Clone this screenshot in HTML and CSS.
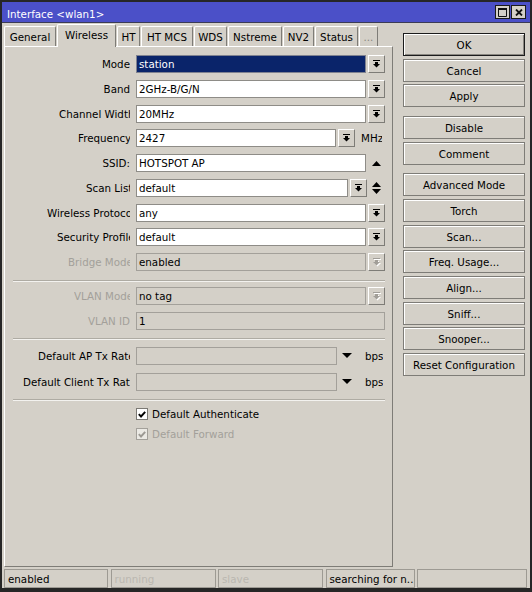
FILE: index.html
```html
<!DOCTYPE html>
<html>
<head>
<meta charset="utf-8">
<title>Interface &lt;wlan1&gt;</title>
<link rel="stylesheet" href="styles.css">
</head>
<body>
<div class="win">
  <div class="titlebar">
    <span class="title">Interface &lt;wlan1&gt;</span>
    <div class="tbtns">
      <span class="tbtn"><svg width="9" height="9" viewBox="0 0 9 9"><path d="M0.5 0.5h8v8h-8z" fill="none" stroke="#111"/><rect x="0" y="0" width="9" height="2" fill="#111"/></svg></span>
      <span class="tbtn"><svg width="8" height="7" viewBox="0 0 8 7"><path d="M1 0.5l6 6M7 0.5l-6 6" stroke="#111" stroke-width="1.8"/></svg></span>
    </div>
  </div>
  <div class="body">
    <div class="main">
      <div class="left">
        <div class="tabs">
          <span class="tab t-general">General</span>
          <span class="tab sel t-wireless">Wireless</span>
          <span class="tab t-ht">HT</span>
          <span class="tab t-htmcs">HT MCS</span>
          <span class="tab t-wds">WDS</span>
          <span class="tab t-nstreme">Nstreme</span>
          <span class="tab t-nv2">NV2</span>
          <span class="tab t-status">Status</span>
          <span class="tab t-more">...</span>
        </div>
        <div class="panel">
          <div class="grp g1">
            <div class="row">
              <span class="lbl"><span>Mode</span></span>
              <span class="inp selected">station</span>
              <span class="dd"><svg width="7" height="8" viewBox="0 0 7 8"><rect width="7" height="1"/><rect x="2" y="2" width="3" height="2"/><path d="M0 4h7L3.5 7.5z"/></svg></span>
            </div>
            <div class="row">
              <span class="lbl"><span>Band</span></span>
              <span class="inp">2GHz-B/G/N</span>
              <span class="dd"><svg width="7" height="8" viewBox="0 0 7 8"><rect width="7" height="1"/><rect x="2" y="2" width="3" height="2"/><path d="M0 4h7L3.5 7.5z"/></svg></span>
            </div>
            <div class="row">
              <span class="lbl"><span class="clip w-chan">Channel Width</span></span>
              <span class="inp">20MHz</span>
              <span class="dd"><svg width="7" height="8" viewBox="0 0 7 8"><rect width="7" height="1"/><rect x="2" y="2" width="3" height="2"/><path d="M0 4h7L3.5 7.5z"/></svg></span>
            </div>
            <div class="row">
              <span class="lbl"><span class="clip w-freq">Frequency</span></span>
              <span class="inp inp-freq">2427</span>
              <span class="dd"><svg width="7" height="8" viewBox="0 0 7 8"><rect width="7" height="1"/><rect x="2" y="2" width="3" height="2"/><path d="M0 4h7L3.5 7.5z"/></svg></span>
              <span class="unit unit-mhz">MHz</span>
            </div>
            <div class="row">
              <span class="lbl"><span>SSID:</span></span>
              <span class="inp inp-ssid">HOTSPOT AP</span>
              <span class="arrows"><svg width="9" height="5" viewBox="0 0 9 5"><path d="M0 5h9L4.5 0z"/></svg></span>
            </div>
            <div class="row">
              <span class="lbl"><span class="clip w-scan">Scan List</span></span>
              <span class="inp inp-scan">default</span>
              <span class="dd"><svg width="7" height="8" viewBox="0 0 7 8"><rect width="7" height="1"/><rect x="2" y="2" width="3" height="2"/><path d="M0 4h7L3.5 7.5z"/></svg></span>
              <span class="arrows"><svg width="9" height="12" viewBox="0 0 9 12"><path d="M0 5h9L4.5 0z"/><path d="M0 7h9L4.5 12z"/></svg></span>
            </div>
            <div class="row">
              <span class="lbl"><span class="clip w-proto">Wireless Protocol</span></span>
              <span class="inp">any</span>
              <span class="dd"><svg width="7" height="8" viewBox="0 0 7 8"><rect width="7" height="1"/><rect x="2" y="2" width="3" height="2"/><path d="M0 4h7L3.5 7.5z"/></svg></span>
            </div>
            <div class="row">
              <span class="lbl"><span class="clip w-sec">Security Profile</span></span>
              <span class="inp">default</span>
              <span class="dd"><svg width="7" height="8" viewBox="0 0 7 8"><rect width="7" height="1"/><rect x="2" y="2" width="3" height="2"/><path d="M0 4h7L3.5 7.5z"/></svg></span>
            </div>
            <div class="row">
              <span class="lbl off"><span class="clip w-bridge">Bridge Mode</span></span>
              <span class="inp dis">enabled</span>
              <span class="dd dd-off"><svg width="8" height="9" viewBox="0 0 8 9"><g fill="#fff" transform="translate(1 1)"><rect width="7" height="1"/><rect x="2" y="2" width="3" height="2"/><path d="M0 4h7L3.5 7.5z"/></g><g fill="#a19e98"><rect width="7" height="1"/><rect x="2" y="2" width="3" height="2"/><path d="M0 4h7L3.5 7.5z"/></g></svg></span>
            </div>
          </div>
          <div class="sep sep1"></div>
          <div class="grp g2">
            <div class="row">
              <span class="lbl off"><span class="clip w-vlanmode">VLAN Mode</span></span>
              <span class="inp dis">no tag</span>
              <span class="dd dd-off"><svg width="8" height="9" viewBox="0 0 8 9"><g fill="#fff" transform="translate(1 1)"><rect width="7" height="1"/><rect x="2" y="2" width="3" height="2"/><path d="M0 4h7L3.5 7.5z"/></g><g fill="#a19e98"><rect width="7" height="1"/><rect x="2" y="2" width="3" height="2"/><path d="M0 4h7L3.5 7.5z"/></g></svg></span>
            </div>
            <div class="row">
              <span class="lbl off"><span>VLAN ID</span></span>
              <span class="inp dis">1</span>
            </div>
          </div>
          <div class="sep"></div>
          <div class="grp g3">
            <div class="row">
              <span class="lbl"><span class="clip w-aptx">Default AP Tx Rate</span></span>
              <span class="inp dis inp-rate"></span>
              <span class="rate-arrow"><svg width="10" height="5" viewBox="0 0 10 5"><path d="M0 0h10L5 5z"/></svg></span>
              <span class="unit unit-bps">bps</span>
            </div>
            <div class="row">
              <span class="lbl"><span class="clip w-cltx">Default Client Tx Rate</span></span>
              <span class="inp dis inp-rate"></span>
              <span class="rate-arrow"><svg width="10" height="5" viewBox="0 0 10 5"><path d="M0 0h10L5 5z"/></svg></span>
              <span class="unit unit-bps">bps</span>
            </div>
          </div>
          <div class="sep sep3"></div>
          <div class="checks">
            <div class="check">
              <span class="cb"><svg width="8" height="7" viewBox="0 0 8 7"><path d="M0.8 3.2l2.2 2.3L7.2 0.8" fill="none" stroke="#000" stroke-width="1.9"/></svg></span>
              <span>Default Authenticate</span>
            </div>
            <div class="check off">
              <span class="cb cb-off"><svg width="8" height="7" viewBox="0 0 8 7"><path d="M0.8 3.2l2.2 2.3L7.2 0.8" fill="none" stroke="#9c9993" stroke-width="1.9"/></svg></span>
              <span>Default Forward</span>
            </div>
          </div>
        </div>
      </div>
      <div class="right">
        <div class="bgrp">
          <span class="btn btn-default">OK</span>
          <span class="btn">Cancel</span>
          <span class="btn">Apply</span>
        </div>
        <div class="bgrp">
          <span class="btn">Disable</span>
          <span class="btn">Comment</span>
        </div>
        <div class="bgrp">
          <span class="btn">Advanced Mode</span>
          <span class="btn">Torch</span>
          <span class="btn">Scan...</span>
          <span class="btn">Freq. Usage...</span>
          <span class="btn">Align...</span>
          <span class="btn">Sniff...</span>
          <span class="btn">Snooper...</span>
          <span class="btn">Reset Configuration</span>
        </div>
      </div>
    </div>
    <div class="status">
      <span class="cell c1">enabled</span>
      <span class="cell c2 off">running</span>
      <span class="cell c3 off">slave</span>
      <span class="cell c4">searching for n..</span>
      <span class="cell c5"></span>
    </div>
  </div>
</div>
</body>
</html>
```

FILE: styles.css
```css
html, body {
  margin: 0;
  padding: 0;
  background: #d4d0c8;
}

body {
  font-family: "DejaVu Sans", "Verdana", sans-serif;
  font-size: 10.3px;
  color: #000;
}

.win {
  width: 532px;
  height: 592px;
  box-sizing: border-box;
  border-style: solid;
  border-color: #262626;
  border-width: 2px 2px 4px 2px;
  background: #d4d0c8;
  display: flex;
  flex-direction: column;
}

/* title bar */
.titlebar {
  height: 20px;
  flex-shrink: 0;
  background: #4b50c8;
  border-bottom: 1px solid #3b3b55;
  display: flex;
  align-items: center;
  justify-content: space-between;
  padding: 0 4px 0 5px;
}

.title {
  color: #fff;
  padding-top: 4px;
  line-height: 12px;
  white-space: nowrap;
}

.tbtns {
  display: flex;
  gap: 1px;
}

.tbtn {
  width: 15px;
  height: 14px;
  box-sizing: border-box;
  border: 1px solid #1a1a1a;
  background: #d4d0c8;
  display: flex;
  align-items: center;
  justify-content: center;
}

/* body */
.body {
  flex: 1;
  display: flex;
  flex-direction: column;
  padding: 1px 5px 0 2px;
  min-height: 0;
}

.main {
  flex: 1;
  display: flex;
  gap: 10px;
  min-height: 0;
}

.left {
  width: 389px;
  display: flex;
  flex-direction: column;
}

/* tabs */
.tabs {
  height: 22px;
  display: flex;
  align-items: flex-end;
  gap: 1px;
  flex-shrink: 0;
}

.tab {
  box-sizing: border-box;
  height: 20px;
  border-top: 1px solid #fff;
  border-left: 1px solid #fff;
  border-right: 1px solid #7e7c77;
  border-radius: 2px 2px 0 0;
  padding-top: 2px;
  line-height: 17px;
  text-align: center;
  white-space: nowrap;
  overflow: hidden;
  background: #d4d0c8;
}

.tab.sel {
  height: 23px;
  margin-bottom: -1px;
  position: relative;
  z-index: 2;
}

.t-general { width: 52px; }
.t-wireless { width: 59px; }
.t-ht { width: 23px; }
.t-htmcs { width: 52px; }
.t-wds { width: 33px; }
.t-nstreme { width: 54px; }
.t-nv2 { width: 31px; }
.t-status { width: 43px; }
.t-more { width: 19px; color: #8a8781; }

/* panel */
.panel {
  flex: 1;
  box-sizing: border-box;
  border-style: solid;
  border-width: 1px;
  border-color: #fff #7e7c77 #7e7c77 #fff;
  padding: 8px 7px 0 8px;
  display: flex;
  flex-direction: column;
  position: relative;
  z-index: 1;
}

.grp {
  display: flex;
  flex-direction: column;
}

.g1 { gap: 6.75px; }
.g2 { gap: 7px; }
.g3 { gap: 8px; }

.row {
  display: flex;
  height: 18px;
  line-height: 18px;
  white-space: nowrap;
}

.lbl {
  width: 117px;
  margin-right: 6px;
  flex-shrink: 0;
  display: flex;
  justify-content: flex-end;
  overflow: hidden;
}

.lbl.off { color: #a3a09a; }

.clip {
  flex-shrink: 0;
  overflow: hidden;
}

.w-chan { width: 71px; }
.w-freq { width: 52px; }
.w-scan { width: 44px; }
.w-proto { width: 83px; }
.w-sec { width: 73px; }
.w-bridge { width: 62px; }
.w-vlanmode { width: 56px; }
.w-aptx { width: 92px; }
.w-cltx { width: 107px; }

.inp {
  flex: 1;
  min-width: 0;
  box-sizing: border-box;
  height: 18px;
  border: 1px solid #8e8c87;
  background: #fff;
  padding-left: 2px;
  line-height: 16px;
  overflow: hidden;
}

.inp.selected {
  background: #0a246a;
  color: #fff;
  border-color: #7f8290;
}

.inp.dis {
  background: #d4d0c8;
  border-color: #a3a09a;
}

.inp-freq { flex: 0 0 200px; }
.inp-scan { flex: 0 0 212px; }
.inp-ssid { flex: 0 0 230px; }
.inp-rate { flex: 0 0 201px; }

.dd {
  width: 17px;
  height: 18px;
  margin-left: 2px;
  box-sizing: border-box;
  flex-shrink: 0;
  border: 1px solid;
  border-color: #fff #7e7c77 #7e7c77 #fff;
  display: flex;
  align-items: center;
  justify-content: center;
}

.dd svg { fill: #000; }

.dd-off svg { margin-left: 1px; margin-top: 1px; }

.arrows {
  flex: 1;
  display: flex;
  align-items: center;
  justify-content: center;
  padding-left: 1px;
}

.unit {
  overflow: hidden;
}

.unit-mhz {
  width: 27px;
  padding-left: 6px;
  box-sizing: border-box;
}

.rate-arrow {
  margin-left: 5px;
  display: flex;
  align-items: center;
  padding-bottom: 1px;
}

.unit-bps {
  margin-left: 13px;
}

/* separators */
.sep {
  height: 0;
  border-top: 1px solid #aeaba3;
  border-bottom: 1px solid #f3f2ef;
  margin: 8px 0 7px;
}

.sep1 { margin: 9px 0 5px; }
.sep3 { margin: 8px 0 5.4px; }

/* checkboxes */
.checks {
  display: flex;
  flex-direction: column;
  gap: 4px;
  padding-left: 123px;
}

.check {
  display: flex;
  align-items: center;
  height: 16px;
  line-height: 16px;
  white-space: nowrap;
}

.check.off { color: #a3a09a; }

.cb {
  width: 12px;
  height: 12px;
  box-sizing: border-box;
  border: 1px solid #7b7974;
  background: #fff;
  margin-right: 4px;
  display: flex;
  align-items: center;
  justify-content: center;
}

.cb-off {
  background: #ebe9e4;
  border-color: #a3a09a;
}

/* right buttons */
.right {
  width: 122px;
  padding-top: 9px;
  display: flex;
  flex-direction: column;
}

.bgrp {
  display: flex;
  flex-direction: column;
  gap: 2.7px;
}

.bgrp + .bgrp { margin-top: 8.6px; }

.btn {
  height: 23px;
  box-sizing: border-box;
  border: 1px solid #7e7c77;
  box-shadow: inset 1px 1px 0 #fff;
  padding-top: 1px;
  line-height: 20px;
  text-align: center;
  white-space: nowrap;
  overflow: hidden;
}

.btn-default {
  border-color: #1c1c1c;
  box-shadow: inset 1px 1px 0 #fff, inset -1px -1px 0 #8a8781;
}

/* status bar */
.status {
  height: 19px;
  margin-top: 2px;
  margin-right: -2px;
  display: flex;
  gap: 2.5px;
  flex-shrink: 0;
}

.cell {
  box-sizing: border-box;
  height: 19px;
  border: 1px solid #9d9a93;
  padding-left: 3px;
  line-height: 18px;
  white-space: nowrap;
  overflow: hidden;
}

.cell.off { color: #bab7b0; }

.c1 { width: 104px; }
.c2 { width: 105px; }
.c3 { width: 105px; }
.c4 { width: 89px; }
.c5 { flex: 1; }
```
